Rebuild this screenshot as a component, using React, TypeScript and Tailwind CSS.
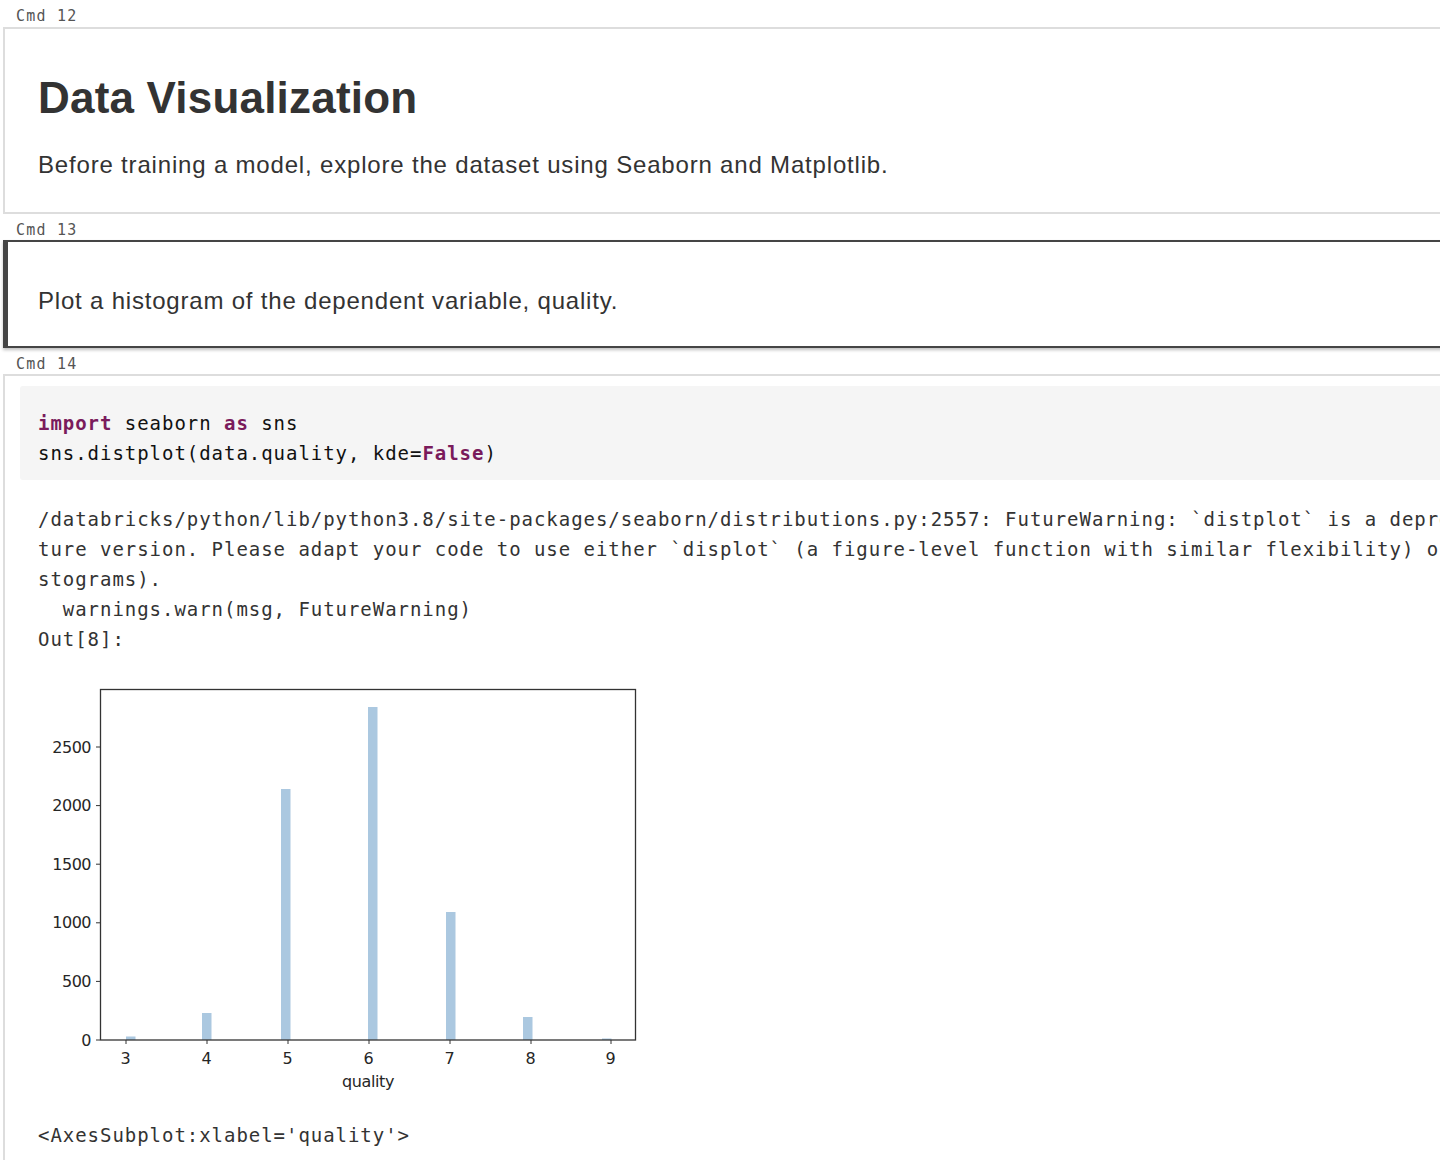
import React from "react";

function CmdLabel({ n, first }: { n: number; first?: boolean }) {
  return (
    <div
      className={`${first ? "h-[27px]" : "h-[26px]"} pl-[13px] pt-[7px] font-['DejaVu_Sans_Mono','Liberation_Mono',monospace] text-[15px] leading-[18px] tracking-[1.2px] text-[#555]`}
    >
      Cmd {n}
    </div>
  );
}

const yTicks = [
  { v: "0", y: 1040 },
  { v: "500", y: 981.4 },
  { v: "1000", y: 922.8 },
  { v: "1500", y: 864.2 },
  { v: "2000", y: 805.6 },
  { v: "2500", y: 747 },
];
const xTicks = [
  { v: "3", x: 126 },
  { v: "4", x: 207 },
  { v: "5", x: 288 },
  { v: "6", x: 369 },
  { v: "7", x: 450 },
  { v: "8", x: 531 },
  { v: "9", x: 611 },
];
const bars = [
  { x: 126, top: 1036.5 },
  { x: 202, top: 1013 },
  { x: 281, top: 789 },
  { x: 368, top: 707 },
  { x: 446, top: 912 },
  { x: 523, top: 1017 },
  { x: 602, top: 1038.5 },
];

function Chart() {
  return (
    <svg width={620} height={440} viewBox="0 0 620 440" className="block">
      <g transform="translate(-30,-670)">
        {bars.map((b, i) => (
          <rect key={i} x={b.x} y={b.top} width={9.5} height={1040 - b.top} fill="#abc8e0" />
        ))}
        <rect x={100.5} y={689.5} width={535} height={350.5} fill="none" stroke="#333" strokeWidth={1.3} />
        {yTicks.map((t) => (
          <g key={t.v}>
            <line x1={96} y1={t.y} x2={100} y2={t.y} stroke="#333" strokeWidth={1} />
            <text
              x={91}
              y={t.y + 5.5}
              textAnchor="end"
              fontSize={16}
              fill="#262626"
              className="font-['DejaVu_Sans',sans-serif] tracking-[-0.5px]"
            >
              {t.v}
            </text>
          </g>
        ))}
        {xTicks.map((t) => (
          <g key={t.v}>
            <line x1={t.x} y1={1040} x2={t.x} y2={1044} stroke="#333" strokeWidth={1} />
            <text
              x={t.x}
              y={1064}
              textAnchor="middle"
              fontSize={16}
              fill="#262626"
              className="font-['DejaVu_Sans',sans-serif]"
            >
              {t.v}
            </text>
          </g>
        ))}
        <text
          x={368}
          y={1087}
          textAnchor="middle"
          fontSize={16}
          fill="#262626"
          className="font-['DejaVu_Sans',sans-serif] tracking-[-0.4px]"
        >
          quality
        </text>
      </g>
    </svg>
  );
}

const outLines = [
  "/databricks/python/lib/python3.8/site-packages/seaborn/distributions.py:2557: FutureWarning: `distplot` is a deprecated function and will be removed in a fu",
  "ture version. Please adapt your code to use either `displot` (a figure-level function with similar flexibility) or `histplot` (an axes-level function for hi",
  "stograms).",
  "  warnings.warn(msg, FutureWarning)",
  "Out[8]:",
];

const kw = "font-bold text-[#7a1b5c]";

export default function App() {
  return (
    <div className="w-[1440px] h-[1160px] overflow-hidden bg-white">
      <div className="w-[1480px] pl-[3px]">
        <CmdLabel n={12} first />
        <div className="h-[187px] border-2 border-[#dddddd] pl-[33px] pt-[42px] font-['Liberation_Sans',Arial,Helvetica,sans-serif] text-[#333]">
          <h1 className="text-[44px] leading-[53px] font-bold tracking-[0.2px]">Data Visualization</h1>
          <p className="mt-[26px] text-[24px] leading-[30px] tracking-[0.82px]">
            Before training a model, explore the dataset using Seaborn and Matplotlib.
          </p>
        </div>

        <CmdLabel n={13} />
        <div className="h-[108px] border-2 border-l-[5px] border-[#454545] pl-[30px] pt-[44px] shadow-[0_2px_3px_rgba(0,0,0,0.25)] font-['Liberation_Sans',Arial,Helvetica,sans-serif] text-[#333]">
          <p className="text-[24px] leading-[30px] tracking-[0.8px]">Plot a histogram of the dependent variable, quality.</p>
        </div>

        <CmdLabel n={14} />
        <div className="h-[800px] border-2 border-b-0 border-[#dddddd] pt-[10px] pl-[15px] font-['DejaVu_Sans_Mono','Liberation_Mono',monospace] text-[19px] leading-[30px] tracking-[0.96px]">
          <div className="h-[94px] bg-[#f5f5f5] rounded-[3px] pl-[18px] pt-[22px] text-[#111] whitespace-pre">
            <div>
              <span className={kw}>import</span> seaborn <span className={kw}>as</span> sns
            </div>
            <div>
              sns.distplot(data.quality, kde=<span className={kw}>False</span>)
            </div>
          </div>

          <div className="pl-[18px] pt-[24px] text-[#333] whitespace-pre">
            {outLines.map((l, i) => (
              <div key={i}>{l}</div>
            ))}
          </div>

          <div className="mt-[16px] pl-[10px]">
            <Chart />
          </div>

          <div className="pl-[18px] mt-[10px] text-[#333] whitespace-pre">{"<AxesSubplot:xlabel='quality'>"}</div>
        </div>
      </div>
    </div>
  );
}
